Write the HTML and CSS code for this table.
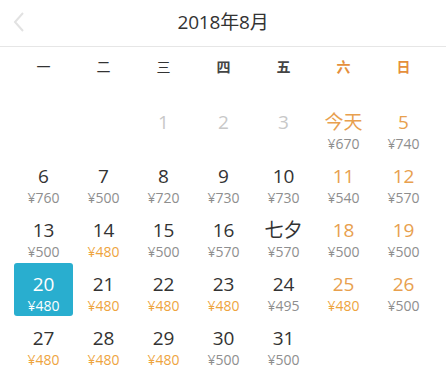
FILE: index.html
```html
<!DOCTYPE html>
<html lang="zh">
<head>
<meta charset="utf-8">
<link rel="stylesheet" href="styles.css">
</head>
<body>
<div class="cal">
  <div class="head">
    <svg class="back" width="14" height="22" viewBox="0 0 14 22"><path d="M11 2 L3 11 L11 20" fill="none" stroke="#e2e2e2" stroke-width="2"/></svg>
    <div class="title">2018年8月</div>
  </div>
  <div class="weekdays">
    <span class="thin">一</span><span class="thin">二</span><span class="thin">三</span><span>四</span><span>五</span><span class="we">六</span><span class="we">日</span>
  </div>
  <div class="grid">
    <div class="cell"></div>
    <div class="cell"></div>
    <div class="cell off"><b>1</b></div>
    <div class="cell off"><b>2</b></div>
    <div class="cell off"><b>3</b></div>
    <div class="cell hol"><b>今天</b><i>¥670</i></div>
    <div class="cell hol"><b>5</b><i>¥740</i></div>

    <div class="cell"><b>6</b><i>¥760</i></div>
    <div class="cell"><b>7</b><i>¥500</i></div>
    <div class="cell"><b>8</b><i>¥720</i></div>
    <div class="cell"><b>9</b><i>¥730</i></div>
    <div class="cell"><b>10</b><i>¥730</i></div>
    <div class="cell hol"><b>11</b><i>¥540</i></div>
    <div class="cell hol"><b>12</b><i>¥570</i></div>

    <div class="cell"><b>13</b><i>¥500</i></div>
    <div class="cell"><b>14</b><i class="low">¥480</i></div>
    <div class="cell"><b>15</b><i>¥500</i></div>
    <div class="cell"><b>16</b><i>¥570</i></div>
    <div class="cell"><b>七夕</b><i>¥570</i></div>
    <div class="cell hol"><b>18</b><i>¥500</i></div>
    <div class="cell hol"><b>19</b><i>¥500</i></div>

    <div class="cell sel"><b>20</b><i>¥480</i></div>
    <div class="cell"><b>21</b><i class="low">¥480</i></div>
    <div class="cell"><b>22</b><i class="low">¥480</i></div>
    <div class="cell"><b>23</b><i class="low">¥480</i></div>
    <div class="cell"><b>24</b><i>¥495</i></div>
    <div class="cell hol"><b>25</b><i class="low">¥480</i></div>
    <div class="cell hol"><b>26</b><i>¥500</i></div>

    <div class="cell"><b>27</b><i class="low">¥480</i></div>
    <div class="cell"><b>28</b><i class="low">¥480</i></div>
    <div class="cell"><b>29</b><i class="low">¥480</i></div>
    <div class="cell"><b>30</b><i>¥500</i></div>
    <div class="cell"><b>31</b><i>¥500</i></div>
  </div>
</div>
</body>
</html>
```
FILE: styles.css
```css
html, body {
  margin: 0;
  padding: 0;
  background: #fff;
}
body {
  font-family: "Open Sans", "Noto Sans CJK SC", sans-serif;
  color: #333;
}
.cal {
  width: 446px;
  height: 385px;
  overflow: hidden;
}
.head {
  position: relative;
  height: 47px;
  box-sizing: border-box;
  padding-bottom: 5px;
  border-bottom: 1px solid #e6e6e6;
  display: flex;
  align-items: center;
  justify-content: center;
}
.back {
  position: absolute;
  left: 12px;
  top: 11px;
}
.title {
  font-size: 19px;
  color: #333;
  letter-spacing: -0.2px;
}
.weekdays {
  display: grid;
  grid-template-columns: repeat(7, 59px);
  column-gap: 1px;
  padding: 0 14px;
  height: 38px;
  align-items: center;
  font-family: "Noto Sans CJK SC", sans-serif;
  font-weight: bold;
  font-size: 14px;
  color: #444;
}
.weekdays span {
  text-align: center;
}
.weekdays .thin {
  font-weight: normal;
  color: #333;
}
.weekdays .we {
  color: #e58f3c;
}
.grid {
  display: grid;
  grid-template-columns: repeat(7, 59px);
  grid-auto-rows: 53px;
  gap: 1px;
  padding: 16px 14px 0;
}
.cell {
  display: flex;
  flex-direction: column;
  align-items: center;
  border-radius: 3px;
}
.cell b {
  font-weight: normal;
  font-size: 19px;
  line-height: 22px;
  margin-top: 10px;
  color: #333;
}
.cell i {
  font-style: normal;
  font-size: 14px;
  line-height: 18px;
  margin-top: 2px;
  color: #8e8e8e;
}
.cell i.low {
  color: #eea43e;
}
.cell.off b {
  color: #c8c8c8;
}
.cell.hol b {
  color: #e8a04e;
}
.cell.sel {
  background: #29aecf;
}
.cell.sel b,
.cell.sel i {
  color: #fff;
}
```
